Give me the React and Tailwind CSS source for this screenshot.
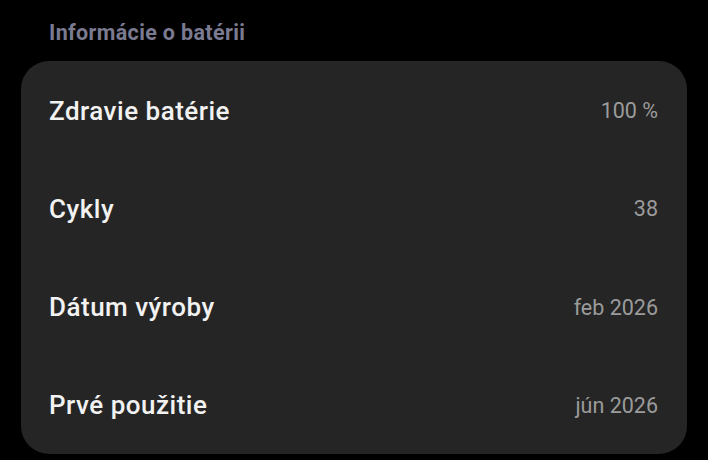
export default function App() {
  const rows = [
    ["Zdravie batérie", "100 %"],
    ["Cykly", "38"],
    ["Dátum výroby", "feb 2026"],
    ["Prvé použitie", "jún 2026"],
  ];
  return (
    <div className="w-[708px] h-[460px] bg-black overflow-hidden" style={{ fontFamily: "Roboto, sans-serif" }}>
      <div className="pl-[49px] pt-[20px] h-[61px]">
        <div className="text-[21.5px] leading-[26px] font-bold tracking-[0.35px] text-[#7a7a90]">Informácie o batérii</div>
      </div>
      <div className="ml-[21px] w-[666px] h-[393px] rounded-[28px] bg-[#252525] pl-[28px] pr-[29px] flex flex-col">
        {rows.map(([l, v]) => (
          <div key={l} className="flex-1 flex items-center justify-between pt-[2px]">
            <span className="text-[26px] font-medium tracking-[0.5px] text-[#f2f2f2]">{l}</span>
            <span className="text-[21.5px] text-[#9b9b9b]">{v}</span>
          </div>
        ))}
      </div>
    </div>
  );
}
